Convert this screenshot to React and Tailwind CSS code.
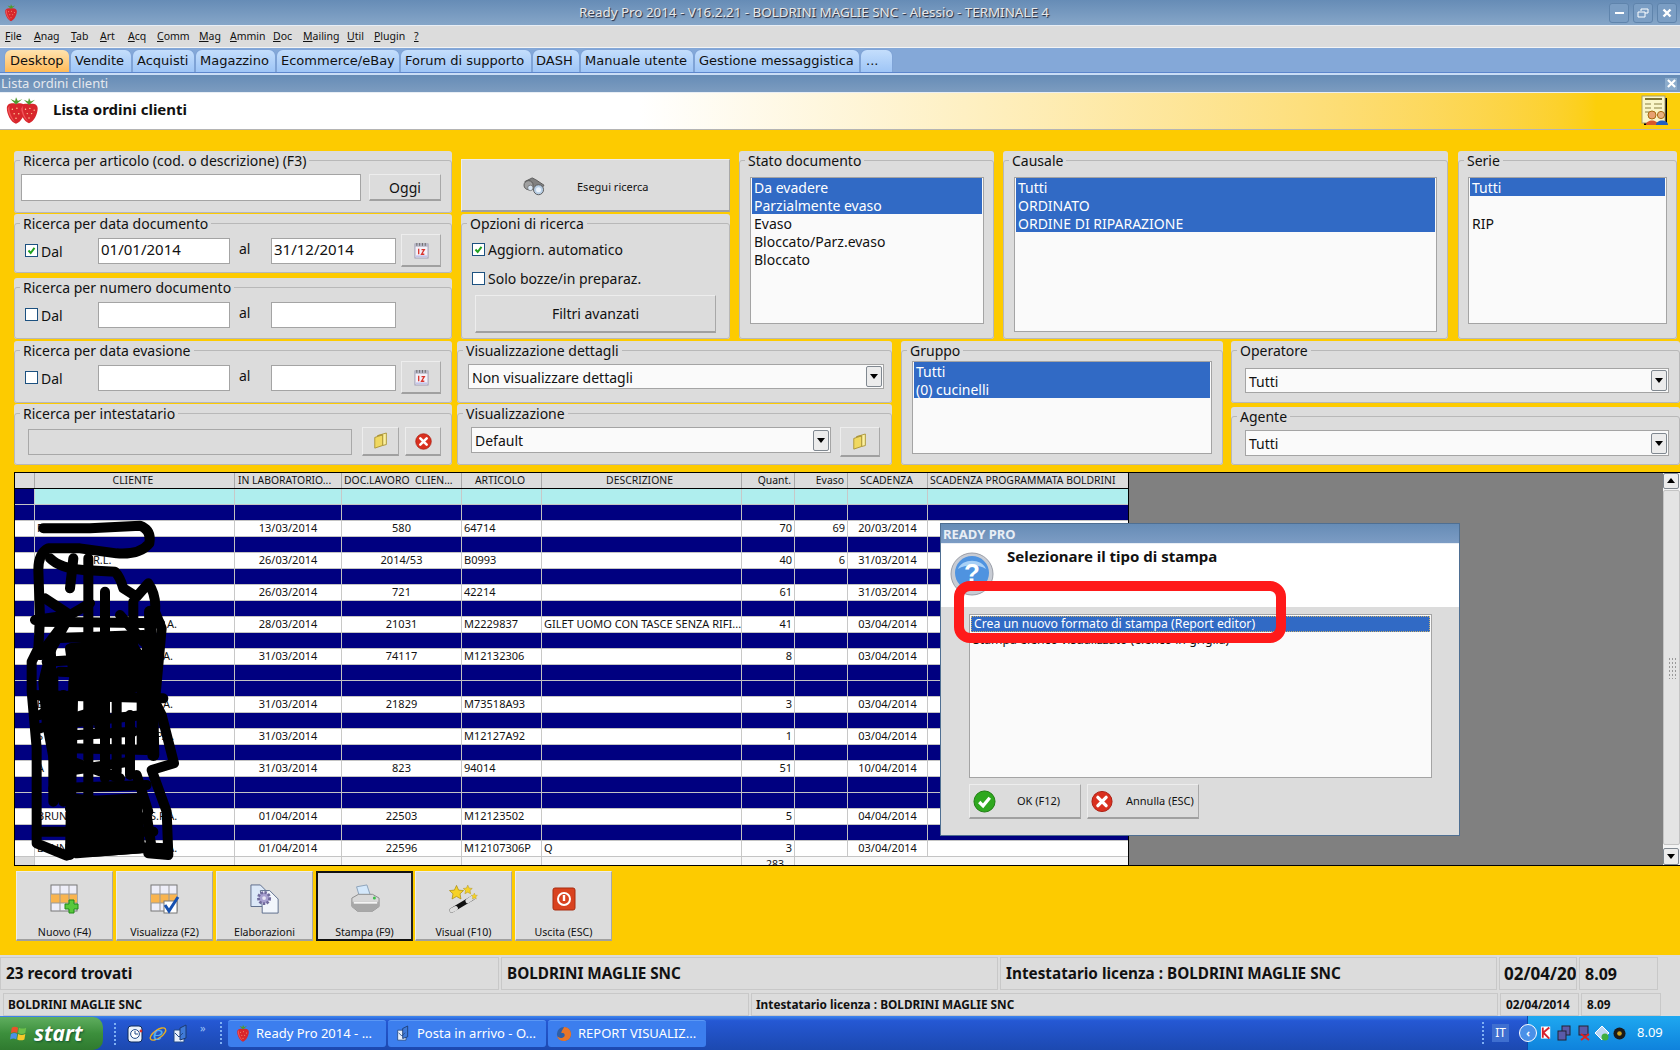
import React from "react";

const Strawberry = ({ className }) => (
  <svg viewBox="0 0 24 30" className={className}>
    <path d="M12 29C6 27 2 18 2 12C2 7 7 6 12 7C17 6 22 7 22 12C22 18 18 27 12 29Z" fill="#d8262c" />
    <path d="M5 9C4 15 7 22 11 27C7 25 3 17 3 12Z" fill="#f0565a" />
    <path d="M12 8L6 2L11 4L12 0L14 4L19 2Z" fill="#4f9a2c" />
    <g fill="#ffd9a0">
      <circle cx="8" cy="13" r=".8" /><circle cx="13" cy="12" r=".8" /><circle cx="18" cy="14" r=".8" />
      <circle cx="10" cy="18" r=".8" /><circle cx="15" cy="18" r=".8" /><circle cx="12" cy="23" r=".8" />
    </g>
  </svg>
);

const Check = ({ checked }) => (
  <span className="w-[13px] h-[13px] border border-[#1c5180] bg-white flex items-center justify-center shrink-0">
    {checked && (
      <svg viewBox="0 0 11 11" className="w-[11px] h-[11px]">
        <path d="M2.5 5.5L4.7 8L8.5 2.8" fill="none" stroke="#21a121" strokeWidth="2" />
      </svg>
    )}
  </span>
);

const CalIcon = () => (
  <svg viewBox="0 0 16 18" className="w-[15px] h-[17px]">
    <rect x="1" y="2" width="14" height="15" fill="#f4f0f8" stroke="#9a9ab0" />
    <rect x="1" y="2" width="14" height="3" fill="#b8b8c8" />
    <path d="M3 1v3M6 1v3M9 1v3M12 1v3" stroke="#666" />
    <path d="M5 7v6M8 8h3l-3 5h3" fill="none" stroke="#d8342c" strokeWidth="1.4" />
    <path d="M2 15h12" stroke="#a0a8e0" />
  </svg>
);

const FolderIcon = () => (
  <svg viewBox="0 0 18 20" className="w-[16px] h-[18px]">
    <path d="M2 6L11 3V15L2 18Z" fill="#f0d860" stroke="#a89030" />
    <path d="M5 4L15 1V14L11 15V3Z" fill="#fbf0a0" stroke="#a89030" />
  </svg>
);

const XCircle = ({ className }) => (
  <svg viewBox="0 0 24 24" className={className}>
    <circle cx="12" cy="12" r="11" fill="#d9301f" stroke="#a81c10" />
    <path d="M7.5 7.5L16.5 16.5M16.5 7.5L7.5 16.5" stroke="#fff" strokeWidth="3.6" strokeLinecap="round" />
  </svg>
);

const OkCircle = ({ className }) => (
  <svg viewBox="0 0 24 24" className={className}>
    <circle cx="12" cy="12" r="11" fill="#2fa81f" stroke="#1c7c10" />
    <path d="M6.5 12.5L10.5 16.5L17.5 8" fill="none" stroke="#fff" strokeWidth="3.4" />
  </svg>
);

const Binoculars = () => (
  <svg viewBox="0 0 26 22" className="w-[24px] h-[20px]">
    <path d="M3 5L11 1L15 3L24 9L19 16L9 13Z" fill="#808080" stroke="#555" />
    <circle cx="7" cy="9" r="5" fill="#a0a0a0" stroke="#555" />
    <circle cx="18" cy="14" r="5.5" fill="#b8cee4" stroke="#555" />
    <circle cx="18" cy="14" r="2.8" fill="#eaf2fb" />
    <circle cx="9" cy="12" r="3" fill="#d8e6f4" stroke="#777" />
  </svg>
);

const GridBase = () => (
  <g>
    <rect x="1" y="1" width="26" height="26" fill="#eeeef8" stroke="#777" />
    <rect x="1" y="10" width="26" height="9" fill="#f9b44f" />
    <path d="M10 1V27M19 1V27M1 10H27M1 19H27" stroke="#999" />
  </g>
);

const GridPlus = () => (
  <svg viewBox="0 0 30 30" className="w-[30px] h-[30px]">
    <GridBase />
    <path d="M19 16h5v4h4v5h-4v4h-5v-4h-4v-5h4z" fill="#58c83c" stroke="#1f8a16" />
  </svg>
);

const GridCheck = () => (
  <svg viewBox="0 0 30 30" className="w-[30px] h-[30px]">
    <GridBase />
    <rect x="14" y="17" width="13" height="12" fill="#fff" stroke="#777" />
    <path d="M15 21L19 27L28 13" fill="none" stroke="#1650b0" strokeWidth="3" />
  </svg>
);

const GearDoc = () => (
  <svg viewBox="0 0 32 32" className="w-[30px] h-[30px]">
    <path d="M1 1H11L17 7V24H1Z" fill="#dce8f8" stroke="#5a6a8a" />
    <path d="M11 7H21L30 16V31H13V24Z" fill="#f2f6fc" stroke="#5a6a8a" />
    <circle cx="15" cy="15" r="6" fill="#a8a0d0" stroke="#706a9c" strokeWidth="3" strokeDasharray="2.5 1.5" />
    <circle cx="15" cy="15" r="2" fill="#e8e6f4" />
  </svg>
);

const Printer = () => (
  <svg viewBox="0 0 32 32" className="w-[30px] h-[30px]">
    <path d="M7 3L18 1L22 13H10Z" fill="#d4e8fb" stroke="#8aa0b8" />
    <path d="M2 15L9 11H24L31 15V24L24 29H8L2 24Z" fill="#d8d8d8" stroke="#8a8a8a" />
    <path d="M2 19H31V24L24 29H8L2 24Z" fill="#a8a8a8" />
    <path d="M4 20H29" stroke="#f4f4f4" strokeWidth="2" />
    <circle cx="26" cy="15" r="1.6" fill="#3cc04a" />
  </svg>
);

const Star = ({ x, y, s }) => (
  <path
    transform={`translate(${x} ${y}) scale(${s})`}
    d="M0 -6L1.8 -2L6 -1.6L3 1.2L3.8 5.6L0 3.4L-3.8 5.6L-3 1.2L-6 -1.6L-1.8 -2Z"
    fill="#f6d226"
    stroke="#a88a10"
    strokeWidth=".6"
  />
);

const Wand = () => (
  <svg viewBox="0 0 32 32" className="w-[30px] h-[30px]">
    <path d="M3 28L25 15" stroke="#111" strokeWidth="5" strokeLinecap="round" />
    <path d="M3 28L7 26" stroke="#ddd" strokeWidth="5" strokeLinecap="round" />
    <path d="M20 18L26 14" stroke="#ddd" strokeWidth="5" strokeLinecap="round" />
    <Star x={8} y={9} s={1.25} />
    <Star x={20} y={6} s={.8} />
    <Star x={27} y={13} s={.55} />
  </svg>
);

const PowerIcon = () => (
  <svg viewBox="0 0 24 24" className="w-[24px] h-[24px]">
    <rect x="1" y="1" width="22" height="22" rx="2" fill="#d9421f" stroke="#a82c10" />
    <circle cx="12" cy="12" r="6" fill="none" stroke="#fff" strokeWidth="2" />
    <path d="M12 8V14" stroke="#fff" strokeWidth="2.4" />
  </svg>
);

const Question = () => (
  <svg viewBox="0 0 44 44" className="w-[44px] h-[44px]">
    <circle cx="22" cy="22" r="21" fill="#c8ccd4" stroke="#9a9ea8" />
    <circle cx="22" cy="21" r="17" fill="#4f93e0" />
    <path d="M8 17C12 6 32 6 36 17C28 12 16 12 8 17Z" fill="#a8d0f6" />
    <text x="22" y="30" textAnchor="middle" fontSize="26" fontWeight="700" fill="#fff" fontFamily="Liberation Sans, sans-serif">?</text>
  </svg>
);

const People = () => (
  <svg viewBox="0 0 28 32" className="w-[28px] h-[32px]">
    <rect x="3" y="3" width="23" height="27" fill="#000" />
    <rect x="1" y="1" width="23" height="27" fill="#faf6c8" stroke="#a8a070" />
    <path d="M4 4H21" stroke="#7a7030" strokeWidth="2" />
    <path d="M4 9H10M4 13H10M4 17H8M13 9H21M13 13H21" stroke="#8a8040" />
    <circle cx="11" cy="20" r="4" fill="#e8a070" stroke="#a86a10" />
    <path d="M5 30C5 24 17 24 17 30Z" fill="#d8582c" />
    <circle cx="20" cy="20" r="3.6" fill="#e8b080" stroke="#a86a10" />
    <path d="M15 30C15 24 27 24 27 30Z" fill="#1f5fc0" />
  </svg>
);

const WinLogo = () => (
  <svg viewBox="0 0 20 20" className="w-[18px] h-[18px]">
    <path d="M2 3Q5 1 9 3L8 9Q5 7 1 9Z" fill="#e8532a" />
    <path d="M10 3Q14 5 18 3L17 9Q13 11 9 9Z" fill="#6cc04a" />
    <path d="M1 10Q5 8 8 10L7 16Q4 14 0 16Z" fill="#4a90e8" />
    <path d="M9 10Q13 12 17 10L16 16Q12 18 8 16Z" fill="#f6c92a" />
  </svg>
);

const IE = () => (
  <svg viewBox="0 0 20 20" className="w-[20px] h-[20px]">
    <ellipse cx="10" cy="10" rx="9" ry="4" fill="none" stroke="#e8b020" strokeWidth="1.4" transform="rotate(-35 10 10)" />
    <text x="10" y="16" textAnchor="middle" fontSize="18" fontStyle="italic" fill="#4fb0f0" fontFamily="DejaVu Serif, serif">e</text>
  </svg>
);

const Mail = ({ className }) => (
  <svg viewBox="0 0 18 20" className={className}>
    <path d="M2 6H12V18H2Z" fill="#e8f0fb" stroke="#234a88" />
    <path d="M8 4L14 1V14L8 16Z" fill="#3f7ad8" stroke="#1c3a70" />
    <path d="M3 9L7 13L11 9" fill="none" stroke="#234a88" />
  </svg>
);

const ClockApp = () => (
  <svg viewBox="0 0 18 20" className="w-[18px] h-[20px]">
    <rect x="2" y="2" width="14" height="16" rx="3" fill="#eaf2fb" stroke="#0e2a5a" />
    <circle cx="9" cy="10" r="4.4" fill="#fff" stroke="#234a88" />
    <path d="M9 7V10H12" stroke="#234a88" fill="none" />
    <circle cx="15" cy="7" r="1.4" fill="#d8342c" />
  </svg>
);

const Firefox = () => (
  <svg viewBox="0 0 18 18" className="w-[16px] h-[16px]">
    <circle cx="9" cy="9" r="8" fill="#2f5fa8" />
    <path d="M9 1C14 1 17 5 17 9C17 14 13 17 9 17C5 17 2 15 1 11C3 14 7 14 9 12C11 10 9 7 6 8C6 5 8 4 9 1Z" fill="#e8752a" />
  </svg>
);

const Btn = ({ className, children }) => (
  <div className={`bg-[#dcdcdc] border-t border-l border-t-[#ededed] border-l-[#ededed] border-r border-b-2 border-r-[#a8a8a8] border-b-[#a0a0a0] flex items-center justify-center shrink-0 ${className}`}>
    {children}
  </div>
);

const Panel = ({ title, className, children }) => (
  <div className={`bg-[#dcdcdc] rounded-[3px] shrink-0 ${className}`}>
    <fieldset className="h-full border border-[#b8b8b8] rounded-[3px]">
      <legend className="ml-[5px] px-[3px] text-[14px] leading-[18px] text-[#111] whitespace-nowrap">
        <span className="relative top-[1px]">{title}</span>
      </legend>
      {children}
    </fieldset>
  </div>
);

const Input = ({ value, className }) => (
  <div className={`bg-white border border-[#a4a4a4] h-[26px] px-[2px] text-[15px] leading-[21px] shrink-0 ${className}`}>{value}</div>
);

const DateRow = ({ checked, from, to, cal }) => (
  <div className="flex items-center mt-[2px] ml-[10px] h-[33px]">
    <Check checked={checked} />
    <span className="w-[60px] pl-[3px] mt-[3px] text-[14px] leading-[18px] shrink-0">Dal</span>
    <Input value={from} className="w-[132px]" />
    <span className="w-[41px] pl-[9px] -mt-[4px] text-[14px] shrink-0">al</span>
    <Input value={to} className="w-[125px]" />
    {cal && (
      <Btn className="ml-[5px] w-[40px] h-[33px]">
        <CalIcon />
      </Btn>
    )}
  </div>
);

const List = ({ items, selected, className }) => (
  <div className={`bg-[#fafafa] border border-[#a4a4a4] px-[1px] text-[14px] ${className}`}>
    {items.map((t, i) => (
      <div key={i} className={`h-[18px] px-[2px] leading-[18px] whitespace-nowrap ${i < selected ? "bg-[#316ac5] text-white" : ""}`}>
        <span className="relative top-[1px]">{t || "\u00a0"}</span>
      </div>
    ))}
  </div>
);

const Arrow = ({ className }) => (
  <div className={`w-[16px] bg-[#ececec] border border-[#808890] rounded-[2px] flex items-center justify-center shrink-0 ${className}`}>
    <span className="w-0 h-0 border-l-[4px] border-r-[4px] border-t-[5px] border-l-transparent border-r-transparent border-t-black" />
  </div>
);

const Select = ({ value, className }) => (
  <div className={`bg-[#fafafa] border border-[#a4a4a4] flex items-center justify-between pl-[3px] pr-[1px] text-[14px] leading-[18px] ${className}`}>
    <span className="relative top-[1px]">{value}</span>
    <Arrow className="h-[21px]" />
  </div>
);

const cols = "grid grid-cols-[20px_200px_107px_120px_80px_200px_53px_53px_80px_201px]";

const Row = ({ r }) => {
  const navy = !r.d;
  const cell = `h-[15px] leading-[14px] border-r whitespace-nowrap overflow-hidden ${navy ? "border-[#c0c0c0]" : "border-[#c8c8c8]"}`;
  return (
    <div className={`${cols} h-[16px] border-b border-[#c4c4c4] text-[11px] ${navy ? "bg-[#000080]" : "bg-white text-[#111]"}`}>
      <div className={cell}></div>
      <div className={`${cell} relative pl-[2px]`}>
        {r.c}
        {r.e && <span className={`absolute top-0 ${r.p}`}>{r.e}</span>}
      </div>
      <div className={`${cell} text-center`}>{r.d}</div>
      <div className={`${cell} text-center`}>{r.l}</div>
      <div className={`${cell} pl-[2px]`}>{r.a}</div>
      <div className={`${cell} pl-[2px]`}>{r.t}</div>
      <div className={`${cell} text-right pr-[2px]`}>{r.q}</div>
      <div className={`${cell} text-right pr-[2px]`}>{r.v}</div>
      <div className={`${cell} text-center`}>{r.s}</div>
      <div className={cell}></div>
    </div>
  );
};

const rows = [
  {},
  { c: "F", d: "13/03/2014", l: "580", a: "64714", q: "70", v: "69", s: "20/03/2014" },
  {},
  { e: "R.L.", p: "left-[58px]", d: "26/03/2014", l: "2014/53", a: "B0993", q: "40", v: "6", s: "31/03/2014" },
  {},
  { d: "26/03/2014", l: "721", a: "42214", q: "61", s: "31/03/2014" },
  {},
  { e: "A.", p: "left-[132px]", d: "28/03/2014", l: "21031", a: "M2229837", t: "GILET UOMO CON TASCE SENZA RIFI...", q: "41", s: "03/04/2014" },
  {},
  { c: "BO", e: ".A.", p: "left-[125px]", d: "31/03/2014", l: "74117", a: "M12132306", q: "8", s: "03/04/2014" },
  {},
  {},
  { c: "BR", e: ".A.", p: "left-[125px]", d: "31/03/2014", l: "21829", a: "M73518A93", q: "3", s: "03/04/2014" },
  {},
  { c: "S", e: "S.P.A.", p: "left-[112px]", d: "31/03/2014", a: "M12127A92", q: "1", s: "03/04/2014" },
  {},
  { c: " A", d: "31/03/2014", l: "823", a: "94014", q: "51", s: "10/04/2014" },
  {},
  {},
  { c: "BRUN", e: "S.P.A.", p: "left-[115px]", d: "01/04/2014", l: "22503", a: "M12123502", q: "5", s: "04/04/2014" },
  {},
  { c: "BRUN", e: "S.P.A.", p: "left-[115px]", d: "01/04/2014", l: "22596", a: "M12107306P", t: "Q", q: "3", s: "03/04/2014" },
];

const heads = [
  ["", ""],
  ["CLIENTE", "text-center pr-[3px]"],
  ["IN LABORATORIO...", "pl-[3px]"],
  ["DOC.LAVORO  CLIEN...", "pl-[2px]"],
  ["ARTICOLO", "text-center pr-[3px]"],
  ["DESCRIZIONE", "text-center pr-[4px]"],
  ["Quant.", "text-right pr-[3px]"],
  ["Evaso", "text-right pr-[3px]"],
  ["SCADENZA", "text-center pr-[2px]"],
  ["SCADENZA PROGRAMMATA BOLDRINI", "pl-[2px]"],
];

const menu = [
  ["F", "ile", "w-[29px]"],
  ["A", "nag", "w-[37px]"],
  ["T", "ab", "w-[29px]"],
  ["A", "rt", "w-[28px]"],
  ["A", "cq", "w-[29px]"],
  ["C", "omm", "w-[42px]"],
  ["M", "ag", "w-[31px]"],
  ["A", "mmin", "w-[43px]"],
  ["D", "oc", "w-[30px]"],
  ["M", "ailing", "w-[44px]"],
  ["U", "til", "w-[27px]"],
  ["P", "lugin", "w-[40px]"],
  ["?", "", "w-[10px]"],
];

const tabs = [
  ["Desktop", "w-[66px] pl-[5px]", true],
  ["Vendite", "w-[62px] pl-[4px]"],
  ["Acquisti", "w-[63px] pl-[4px]"],
  ["Magazzino", "w-[81px] pl-[4px]"],
  ["Ecommerce/eBay", "w-[124px] pl-[4px]"],
  ["Forum di supporto", "w-[132px] pl-[4px]"],
  ["DASH", "w-[48px] pl-[3px]"],
  ["Manuale utente", "w-[114px] pl-[4px]"],
  ["Gestione messaggistica", "w-[166px] pl-[4px]"],
  ["...", "w-[33px] pl-[5px]"],
];

const tools = [
  ["Nuovo (F4)", <GridPlus />, "ml-0"],
  ["Visualizza (F2)", <GridCheck />, "ml-[3px]"],
  ["Elaborazioni", <GearDoc />, "ml-[3px]"],
  ["Stampa (F9)", <Printer />, "ml-[3px]", true],
  ["Visual (F10)", <Wand />, "ml-[2px]"],
  ["Uscita (ESC)", <PowerIcon />, "ml-[3px]"],
];

const Task = ({ icon, label }) => (
  <div className="w-[158px] h-[27px] mr-[2px] rounded-[3px] bg-[#3c7eee] flex items-center pl-[8px] gap-[6px] text-[13px] text-white whitespace-nowrap shrink-0 border-t border-[#5c98f4]">
    {icon}
    <span>{label}</span>
  </div>
);

const StatusCell = ({ className, children }) => (
  <div className={`border border-[#c8c8c8] overflow-hidden whitespace-nowrap flex items-center shrink-0 ${className}`}>{children}</div>
);

const Scribble = () => (
  <svg viewBox="0 0 510 1050" className="absolute left-[20px] top-[515px] w-[170px] h-[350px]" fill="none" stroke="#000" strokeWidth="30" strokeLinecap="round" strokeLinejoin="round">
    <path d="M70 40L210 40L360 32Q395 45 388 85Q360 120 290 115L180 100L85 100Q55 115 55 165L60 310L55 400L35 440L35 530L50 700L50 850L50 985L140 1022" />
    <path d="M90 130Q120 160 190 165L285 170Q300 185 310 220L350 245L385 205Q410 240 405 290L425 340L405 560L425 600L462 745L395 765L440 890L445 1020L385 1015" />
    <path d="M45 315L150 300L95 400L70 500L80 620L110 780" />
    <path d="M75 250L150 300L210 265M160 130L150 220M205 130L205 1010M160 500L150 1020M255 230L255 790M340 260L340 520M330 600L330 780M380 380L385 700" />
    <path d="M40 540L430 550M80 440L400 420M140 625L370 600M150 700L380 705M130 770L330 740M100 820L380 810M60 950L400 950M180 990L440 1000M60 320L420 325M100 370L370 360" />
    <path d="M150 400L330 380L370 440L320 540L170 540Z" fill="#000" />
    <path d="M170 860L350 850L360 1000L170 1015Z" fill="#000" />
    <path d="M120 470L360 480M150 880L340 900" />
    <path d="M100 480L100 860M130 540L130 860M60 600L130 560M290 560L290 770M365 420L365 700M230 560L240 650M60 640L220 590M300 300L370 380M120 340L60 420M170 660L340 650M100 720L300 790M150 850L350 870" />
    <path d="M350 780L385 890M380 900L395 1000M220 1010L370 1000" />
    <path d="M390 290L400 720" strokeWidth="36" />
    <path d="M90 420L90 580" strokeWidth="36" />
  </svg>
);

export default function App() {
  return (
    <div className="relative w-[1680px] h-[1050px] overflow-hidden flex flex-col bg-[#fdcb00] text-[#111] font-['Noto_Sans','Liberation_Sans',sans-serif]">
      {/* Window title */}
      <div className="h-[26px] shrink-0 border-b border-[#e8eef5] bg-linear-to-b from-[#668cb6] to-[#86a6c8] flex items-center justify-between pl-[4px] pr-[3px]">
        <Strawberry className="w-[14px] h-[18px]" />
        <span className="text-[13.4px] text-[#e8e8e8] [text-shadow:1px_1px_1px_#223] ml-[1px]">Ready Pro 2014 - V16.2.21 - BOLDRINI MAGLIE SNC - Alessio - TERMINALE 4</span>
        <div className="flex gap-[4px]">
          {["min", "max", "close"].map((k) => (
            <div key={k} className="w-[20px] h-[20px] rounded-[3px] border border-[#5f84ac] bg-[#7b9ec4] flex items-center justify-center">
              {k === "min" && <span className="w-[9px] h-[2px] bg-white" />}
              {k === "max" && (
                <svg viewBox="0 0 12 10" className="w-[12px] h-[10px]" fill="none" stroke="#fff"><path d="M4 3V1H11V5H8M1 4H8V9H1Z" /></svg>
              )}
              {k === "close" && (
                <svg viewBox="0 0 10 10" className="w-[10px] h-[10px]"><path d="M1.5 1.5L8.5 8.5M8.5 1.5L1.5 8.5" stroke="#fff" strokeWidth="2.4" /></svg>
              )}
            </div>
          ))}
        </div>
      </div>

      {/* Menu */}
      <div className="h-[22px] shrink-0 bg-[#dcdcdc] border-b border-[#f4f4f4] flex items-center pl-[5px] pt-[1px] text-[10.5px]">
        {menu.map(([a, b, w]) => (
          <span key={a + b} className={`${w} shrink-0`}><span className="underline">{a}</span>{b}</span>
        ))}
      </div>

      {/* Tabs */}
      <div className="h-[25px] shrink-0 bg-[#84a8d8] border-b border-[#5c86cc] flex items-end pl-[4px] font-['DejaVu_Sans',sans-serif] text-[13px]">
        {tabs.map(([t, w, active]) => (
          <div key={t} className={`${w} h-[23px] shrink-0 rounded-t-[7px] border-t border-x border-[#7fa3d6] flex items-center whitespace-nowrap ${active ? "bg-linear-to-b from-[#ffe3ae] to-[#ffba55]" : "bg-linear-to-b from-[#c4defc] to-[#9ec5f6]"}`}>{t}</div>
        ))}
      </div>

      <div className="h-[2px] shrink-0 bg-[#c9ddf6]" />

      {/* Sub window title */}
      <div className="h-[18px] shrink-0 border-b border-[#e8eef5] bg-linear-to-b from-[#668cb6] to-[#7c9cc0] flex items-center justify-between pl-[1px] pr-[3px]">
        <span className="text-[13px] text-[#e4e8ee]">Lista ordini clienti</span>
        <div className="w-[12px] h-[12px] bg-[#8caccc] flex items-center justify-center">
          <svg viewBox="0 0 10 10" className="w-[9px] h-[9px]"><path d="M1 1L9 9M9 1L1 9" stroke="#fff" strokeWidth="2.4" /></svg>
        </div>
      </div>

      {/* Header */}
      <div className="h-[37px] shrink-0 border-b border-[#b4b4b4] bg-linear-to-r from-white from-[38%] to-[#fccf0a] to-[95%] flex items-center justify-between pl-[5px] pr-[11px]">
        <div className="flex items-center">
          <div className="flex -space-x-[9px]">
            <Strawberry className="w-[22px] h-[28px]" />
            <Strawberry className="w-[22px] h-[26px] mt-[1px]" />
          </div>
          <span className="ml-[13px] -mt-[4px] text-[15px] font-bold">Lista ordini clienti</span>
        </div>
        <People />
      </div>

      {/* Search form */}
      <div className="mt-[21px] flex items-start shrink-0">
        <div className="ml-[14px] w-[438px] flex flex-col shrink-0">
          <Panel title="Ricerca per articolo (cod. o descrizione) (F3)" className="h-[62px]">
            <div className="flex items-start mt-[5px] ml-[6px]">
              <Input className="w-[340px] h-[27px]" />
              <Btn className="ml-[8px] w-[72px] h-[27px] text-[14px]">Oggi</Btn>
            </div>
          </Panel>
          <Panel title="Ricerca per data documento" className="h-[59px] mt-[1px]">
            <DateRow checked from="01/01/2014" to="31/12/2014" cal />
          </Panel>
          <Panel title="Ricerca per numero documento" className="h-[61px] mt-[5px]">
            <DateRow />
          </Panel>
          <Panel title="Ricerca per data evasione" className="h-[62px] mt-[2px]">
            <DateRow cal />
          </Panel>
          <Panel title="Ricerca per intestatario" className="h-[61px] mt-[1px]">
            <div className="flex items-center mt-[5px] ml-[13px] h-[29px]">
              <div className="w-[324px] h-[26px] bg-[#dcdcdc] border border-[#a8a8a8] shrink-0" />
              <Btn className="ml-[10px] w-[37px] h-[29px]"><FolderIcon /></Btn>
              <Btn className="ml-[6px] w-[36px] h-[29px]"><XCircle className="w-[17px] h-[17px]" /></Btn>
            </div>
          </Panel>
        </div>

        <div className="ml-[5px] flex flex-col shrink-0">
          <div className="flex items-start h-[188px]">
            <div className="ml-[4px] w-[269px] flex flex-col shrink-0">
              <Btn className="mt-[8px] h-[53px] pt-[4px]">
                <div className="flex items-center w-full pl-[60px]">
                  <Binoculars />
                  <span className="ml-[31px] text-[11px]">Esegui ricerca</span>
                </div>
              </Btn>
              <Panel title="Opzioni di ricerca" className="h-[125px] mt-[2px]">
                <div className="flex items-center gap-[3px] mt-[8px] ml-[10px] h-[18px] text-[14px]">
                  <Check checked /><span>Aggiorn. automatico</span>
                </div>
                <div className="flex items-center gap-[3px] mt-[11px] ml-[10px] h-[18px] text-[14px]">
                  <Check /><span>Solo bozze/in preparaz.</span>
                </div>
                <Btn className="mt-[8px] ml-[13px] w-[241px] h-[38px] text-[14px]">Filtri avanzati</Btn>
              </Panel>
            </div>
            <Panel title="Stato documento" className="ml-[9px] w-[255px] h-[188px]">
              <List className="mt-[8px] ml-[10px] w-[234px] h-[147px]" selected={2} items={["Da evadere", "Parzialmente evaso", "Evaso", "Bloccato/Parz.evaso", "Bloccato"]} />
            </Panel>
            <Panel title="Causale" className="ml-[9px] w-[445px] h-[188px]">
              <List className="mt-[8px] ml-[10px] w-[423px] h-[155px]" selected={3} items={["Tutti", "ORDINATO", "ORDINE DI RIPARAZIONE"]} />
            </Panel>
            <Panel title="Serie" className="ml-[10px] w-[219px] h-[188px]">
              <List className="mt-[8px] ml-[9px] w-[199px] h-[147px]" selected={1} items={["Tutti", "", "RIP"]} />
            </Panel>
          </div>

          <div className="flex items-start mt-[2px] h-[124px]">
            <div className="w-[435px] flex flex-col shrink-0">
              <Panel title="Visualizzazione dettagli" className="h-[62px]">
                <Select className="mt-[5px] ml-[10px] w-[416px] h-[25px]" value="Non visualizzare dettagli" />
              </Panel>
              <Panel title="Visualizzazione" className="h-[61px] mt-[1px]">
                <div className="flex items-start mt-[5px] ml-[13px]">
                  <Select className="w-[360px] h-[26px] shrink-0" value="Default" />
                  <Btn className="ml-[9px] w-[40px] h-[30px]"><FolderIcon /></Btn>
                </div>
              </Panel>
            </div>
            <Panel title="Gruppo" className="ml-[9px] w-[322px] h-[124px]">
              <List className="mt-[2px] ml-[10px] w-[300px] h-[93px]" selected={2} items={["Tutti", "(0) cucinelli"]} />
            </Panel>
            <div className="ml-[8px] w-[449px] flex flex-col shrink-0">
              <Panel title="Operatore" className="h-[62px]">
                <Select className="mt-[9px] ml-[13px] w-[424px] h-[25px]" value="Tutti" />
              </Panel>
              <Panel title="Agente" className="h-[58px] mt-[4px]">
                <Select className="mt-[5px] ml-[13px] w-[424px] h-[26px]" value="Tutti" />
              </Panel>
            </div>
          </div>
        </div>
      </div>

      {/* Grid */}
      <div className="mt-[7px] ml-[14px] w-[1666px] h-[394px] shrink-0 flex border-y border-l border-black bg-[#808080] overflow-hidden">
        <div className="w-[1114px] shrink-0 border-r border-black bg-[#f8f8f8] overflow-hidden">
          <div className={`${cols} h-[15px] bg-[#dcdcdc] text-[10.4px] leading-[15px] whitespace-nowrap`}>
            {heads.map(([h, c], i) => (
              <div key={i} className={`border-r border-[#a8a8a8] overflow-hidden whitespace-pre ${c}`}>{h}</div>
            ))}
          </div>
          <div className="h-[1px] bg-black" />
          <div className={`${cols} h-[16px] bg-[#afeeee] border-b border-[#c4c4c4]`}>
            {heads.map((_, i) => (
              <div key={i} className={`border-r border-[#c8c8c8] h-[15px] ${i === 0 ? "bg-[#000080]" : ""}`} />
            ))}
          </div>
          {rows.map((r, i) => <Row key={i} r={r} />)}
          <div className={`${cols} h-[16px] text-[10.5px] leading-[15px]`}>
            <div className="bg-[#dcdcdc] border-r border-[#c8c8c8]" />
            <div className="border-r border-[#c8c8c8]" />
            <div className="border-r border-[#c8c8c8]" />
            <div className="border-r border-[#c8c8c8]" />
            <div className="border-r border-[#c8c8c8]" />
            <div className="border-r border-[#c8c8c8]" />
            <div className="border-r border-[#c8c8c8] text-right pr-[10px]">283</div>
          </div>
        </div>
        <div className="flex-1" />
        <div className="w-[17px] shrink-0 bg-[#f4f4f4] flex flex-col">
          <Arrow className="h-[16px] rotate-180" />
          <div className="flex-1 mt-[1px] bg-[#e4e4e4] border border-[#c4c4c4] rounded-[2px] flex items-center justify-center mb-[3px]">
            <div className="w-[8px] h-[22px] [background-image:radial-gradient(#999_1px,transparent_1px)] [background-size:3px_4px]" />
          </div>
          <Arrow className="h-[17px]" />
        </div>
      </div>

      {/* Tool buttons */}
      <div className="mt-[5px] ml-[16px] flex items-start shrink-0">
        {tools.map(([label, icon, ml, active]) => (
          <div key={label} className={`${ml} w-[97px] h-[70px] shrink-0 bg-[#dcdcdc] flex flex-col items-center text-[10.6px] ${active ? "border-2 border-[#111] border-r-[#222] pt-[11px]" : "border border-[#ececec] border-b-2 border-b-[#a0a0a0] border-r-[#a8a8a8] pt-[12px]"}`}>
            <div className="h-[30px] shrink-0 flex items-center justify-center">{icon}</div>
            <span className="mt-[11px] leading-[14px] shrink-0">{label}</span>
          </div>
        ))}
      </div>

      {/* Status area */}
      <div className="mt-[14px] h-[61px] shrink-0 bg-[#dcdcdc] pt-[2px] flex flex-col">
        <div className="flex h-[33px] gap-[2px] font-bold text-[15.3px]">
          <StatusCell className="w-[499px] pl-[5px]">23 record trovati</StatusCell>
          <StatusCell className="w-[497px] pl-[5px]">BOLDRINI MAGLIE SNC</StatusCell>
          <StatusCell className="w-[497px] pl-[5px]">Intestatario licenza : BOLDRINI MAGLIE SNC</StatusCell>
          <StatusCell className="w-[78px] pl-[4px] text-[17px]">02/04/2014</StatusCell>
          <StatusCell className="w-[79px] pl-[5px] text-[16px]">8.09</StatusCell>
        </div>
        <div className="flex h-[23px] mt-[3px] ml-[3px] gap-[2px] font-bold text-[11.8px]">
          <StatusCell className="w-[746px] pl-[4px]">BOLDRINI MAGLIE SNC</StatusCell>
          <StatusCell className="w-[747px] pl-[4px]">Intestatario licenza : BOLDRINI MAGLIE SNC</StatusCell>
          <StatusCell className="w-[79px] pl-[5px]">02/04/2014</StatusCell>
          <StatusCell className="w-[80px] pl-[5px]">8.09</StatusCell>
        </div>
      </div>

      {/* Taskbar */}
      <div className="h-[34px] shrink-0 flex items-stretch bg-linear-to-b from-[#3f86ee] via-[#2558d4] via-[14%] to-[#1c49b0] font-['Noto_Sans',sans-serif]">
        <div className="w-[103px] shrink-0 rounded-r-[10px] mt-[1px] bg-linear-to-b from-[#5fae5f] via-[#3c8f3c] to-[#2f7a2f] flex items-center pl-[10px] gap-[6px]">
          <WinLogo />
          <span className="text-[21px] font-bold italic text-white [text-shadow:1px_1px_2px_#153]">start</span>
        </div>
        <div className="ml-[11px] w-[106px] shrink-0 flex items-center gap-[4px] pt-[1px]">
          <span className="h-[22px] border-l-2 border-dotted border-[#7fb0f4] mr-[6px]" />
          <ClockApp />
          <IE />
          <Mail className="w-[18px] h-[20px]" />
          <span className="ml-[6px] -mt-[10px] text-[11px] text-[#9cc0f4]">»</span>
        </div>
        <span className="h-[22px] self-center border-l-2 border-dotted border-[#7fb0f4] mr-[6px]" />
        <div className="flex items-center">
          <Task icon={<Strawberry className="w-[14px] h-[19px]" />} label="Ready Pro 2014 - ..." />
          <Task icon={<Mail className="w-[15px] h-[17px]" />} label="Posta in arrivo - O..." />
          <Task icon={<Firefox />} label="REPORT VISUALIZ..." />
        </div>
        <div className="flex-1" />
        <div className="flex items-center mr-[18px] gap-[8px]">
          <span className="h-[22px] border-l-2 border-dotted border-[#7fb0f4]" />
          <span className="px-[3px] bg-[#3f6fd0] text-[12px] text-white">IT</span>
        </div>
        <div className="w-[153px] shrink-0 bg-linear-to-b from-[#1fa8f0] to-[#0f82dc] border-l border-[#0b4aa8] flex items-center">
          <div className="-ml-[9px] w-[18px] h-[18px] rounded-full bg-[#4a90e8] border border-white text-white text-[11px] font-bold flex items-center justify-center">‹</div>
          <div className="ml-[3px] flex items-center gap-[3px]">
            <svg viewBox="0 0 14 16" className="w-[13px] h-[16px]"><rect x="1" y="1" width="10" height="13" fill="#fff" /><path d="M3 2V13M3 8L10 2M4 8L10 14" stroke="#d8202c" strokeWidth="2" /></svg>
            <svg viewBox="0 0 16 16" className="w-[16px] h-[16px]"><rect x="6" y="1" width="8" height="9" fill="#5a5aa8" stroke="#223" /><rect x="2" y="6" width="8" height="9" fill="#5a5aa8" stroke="#223" /></svg>
            <svg viewBox="0 0 16 16" className="w-[16px] h-[16px]"><rect x="4" y="1" width="9" height="9" fill="#5a5aa8" stroke="#223" /><path d="M6 9L14 15M14 9L6 15" stroke="#e02020" strokeWidth="2" /></svg>
            <svg viewBox="0 0 16 16" className="w-[16px] h-[16px]"><path d="M8 1L15 8L8 15L1 8Z" fill="#bcd6f4" stroke="#fff" /><circle cx="11" cy="12" r="3.5" fill="#3fae3f" /></svg>
            <svg viewBox="0 0 14 14" className="w-[13px] h-[13px]"><circle cx="7" cy="7" r="6.5" fill="#1a1a1a" /><circle cx="7" cy="7" r="2.5" fill="#c8a020" /></svg>
          </div>
          <span className="ml-[11px] text-[13px] text-white">8.09</span>
        </div>
      </div>

      <Scribble />

      {/* Dialog */}
      <div className="absolute left-[940px] top-[523px] w-[520px] h-[313px] border border-[#4f6f92] bg-[#dcdcdc] flex flex-col">
        <div className="h-[19px] shrink-0 bg-linear-to-b from-[#668cb6] to-[#7c9cc4] pl-[2px] text-[13px] font-bold leading-[20px] text-[#e8eef5]">READY PRO</div>
        <div className="h-[64px] shrink-0 bg-white border-t border-[#e8eef5] relative">
          <div className="absolute left-[9px] top-[8px]"><Question /></div>
          <div className="pl-[66px] pt-[1px] text-[15px] font-bold">Selezionare il tipo di stampa</div>
        </div>
        <div className="mt-[7px] ml-[28px] w-[463px] h-[164px] shrink-0 bg-[#fafafa] border border-[#a4a4a4] p-[1px] text-[12.25px] leading-[16px]">
          <div className="h-[16px] pl-[2px] bg-[#316ac5] text-white border border-dotted border-[#c8b070] leading-[14px]">Crea un nuovo formato di stampa (Report editor)</div>
          <div className="h-[16px] pl-[2px]">Stampa elenco visualizzato (elenco in griglia)</div>
        </div>
        <div className="mt-[6px] ml-[28px] flex items-start gap-[6px]">
          <Btn className="w-[112px] h-[35px] text-[11px] justify-start">
            <OkCircle className="ml-[3px] w-[23px] h-[23px]" />
            <span className="ml-[21px]">OK (F12)</span>
          </Btn>
          <Btn className="w-[112px] h-[35px] text-[11px] justify-start">
            <XCircle className="ml-[3px] w-[22px] h-[23px]" />
            <span className="ml-[13px]">Annulla (ESC)</span>
          </Btn>
        </div>
      </div>

      {/* Red annotation */}
      <div className="absolute left-[954px] top-[581px] w-[332px] h-[62px] border-[10px] border-[#ff1a1a] rounded-[16px]" />
    </div>
  );
}
